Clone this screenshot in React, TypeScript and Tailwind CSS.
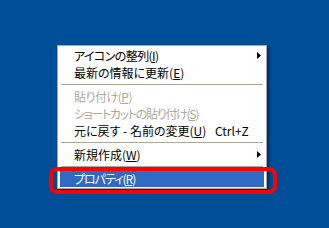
import React from "react";

type Item = {
  label: React.ReactNode;
  disabled?: boolean;
  submenu?: boolean;
  shortcut?: string;
  selected?: boolean;
  // kana in the original bitmap font are narrower than in Noto
  tight?: string;
};

const u = (ch: string) => <span className="underline underline-offset-[1px]">{ch}</span>;

const groups: Item[][] = [
  [
    { label: <>アイコンの整列({u("I")})</>, submenu: true, tight: "tracking-[-0.6px]" },
    { label: <>最新の情報に更新({u("E")})</> },
  ],
  [
    { label: <>貼り付け({u("P")})</>, disabled: true, tight: "tracking-[-0.5px]" },
    {
      label: <>ショートカットの貼り付け({u("S")})</>,
      disabled: true,
      tight: "tracking-[-1.3px]",
    },
    { label: <>元に戻す - 名前の変更({u("U")})</>, shortcut: "Ctrl+Z" },
  ],
  [{ label: <>新規作成({u("W")})</>, submenu: true }],
  [{ label: <>プロパティ({u("R")})</>, selected: true, tight: "tracking-[-1px]" }],
];

function Arrow() {
  return (
    <svg width="4" height="7" viewBox="0 0 4 7" className="shrink-0">
      <path d="M0 0 L4 3.5 L0 7 Z" fill="#000" />
    </svg>
  );
}

function MenuRow({ item }: { item: Item }) {
  const color = item.selected
    ? "text-white"
    : item.disabled
      ? "text-[#aca899]"
      : "text-black";
  return (
    <div
      className={`relative flex h-[17px] items-center pl-[14px] pr-[3px] ${
        item.selected ? "bg-[#316ac5]" : ""
      } ${color}`}
    >
      {item.shortcut ? (
        <>
          <span className="w-[141px] whitespace-nowrap">{item.label}</span>
          <span className="whitespace-nowrap">{item.shortcut}</span>
        </>
      ) : (
        <span className={`whitespace-nowrap ${item.tight ?? ""}`}>{item.label}</span>
      )}
      <span className="flex-1" />
      {item.submenu && <Arrow />}
      {item.selected && (
        <div className="pointer-events-none absolute left-[-11px] top-[-3px] h-[27px] w-[228px] rounded-[8px] border-4 border-[#ff0000]" />
      )}
    </div>
  );
}

export default function App() {
  return (
    <div className="h-[228px] w-[329px] overflow-hidden bg-[#004e98] pl-[57px] pt-[45px] font-['Noto_Sans_CJK_JP','Noto_Sans',sans-serif] text-[12px] leading-[17px] [font-feature-settings:'palt']">
      <div className="w-[210px] border border-[#a7a6aa] bg-white px-[2px] py-[1px] shadow-[2px_2px_3px_rgba(0,0,0,0.45)]">
        {groups.map((g, gi) => (
          <div key={gi}>
            {gi > 0 && (
              <div className="flex h-[7px] items-center px-[1px]">
                <div className="h-px w-full bg-[#aca899]" />
              </div>
            )}
            {g.map((item, ii) => (
              <MenuRow key={ii} item={item} />
            ))}
          </div>
        ))}
      </div>
    </div>
  );
}
